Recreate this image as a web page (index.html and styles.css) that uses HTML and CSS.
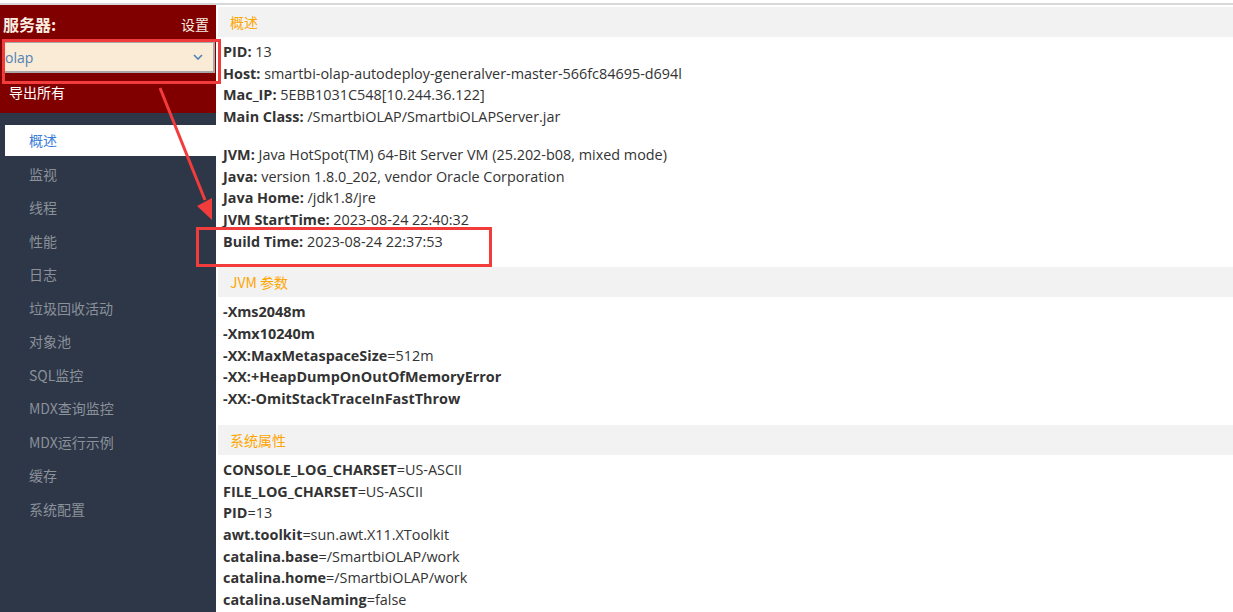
FILE: index.html
```html
<!DOCTYPE html>
<html lang="zh-CN">
<head>
  <meta charset="UTF-8" />
  <meta name="viewport" content="width=device-width, initial-scale=1.0" />
  <title>服务器监控</title>
  <link rel="stylesheet" href="styles.css">
</head>
<body>
  <div class="topline"></div>

  <div class="layout">
    <aside class="sidebar">
      <div class="server-box">
        <div class="server-head">
          <span class="server-title">服务器:</span>
          <a class="server-setting">设置</a>
        </div>
        <div class="select">
          <span>olap</span>
          <svg width="10" height="6" viewBox="0 0 10 6"><polyline points="1,1 5,5 9,1" fill="none" stroke="#4f82b4" stroke-width="1.6"/></svg>
        </div>
        <a class="export">导出所有</a>
      </div>

      <ul class="menu">
        <li class="active">概述</li>
        <li>监视</li>
        <li>线程</li>
        <li>性能</li>
        <li>日志</li>
        <li>垃圾回收活动</li>
        <li>对象池</li>
        <li>SQL监控</li>
        <li>MDX查询监控</li>
        <li>MDX运行示例</li>
        <li>缓存</li>
        <li>系统配置</li>
      </ul>
    </aside>

    <main class="content">
      <div class="panel-title">概述</div>
      <div class="panel-body">
        <p>
          <b>PID:</b> 13<br>
          <b>Host:</b> smartbi-olap-autodeploy-generalver-master-566fc84695-d694l<br>
          <b>Mac_IP:</b> 5EBB1031C548[10.244.36.122]<br>
          <b>Main Class:</b> /SmartbiOLAP/SmartbiOLAPServer.jar
        </p>
        <p>
          <b>JVM:</b> Java HotSpot(TM) 64-Bit Server VM (25.202-b08, mixed mode)<br>
          <b>Java:</b> version 1.8.0_202, vendor Oracle Corporation<br>
          <b>Java Home:</b> /jdk1.8/jre<br>
          <b>JVM StartTime:</b> 2023-08-24 22:40:32<br>
          <b>Build Time:</b> 2023-08-24 22:37:53
        </p>
      </div>

      <div class="panel-title">JVM 参数</div>
      <div class="panel-body">
        <p>
          <b>-Xms2048m</b><br>
          <b>-Xmx10240m</b><br>
          <b>-XX:MaxMetaspaceSize</b>=512m<br>
          <b>-XX:+HeapDumpOnOutOfMemoryError</b><br>
          <b>-XX:-OmitStackTraceInFastThrow</b>
        </p>
      </div>

      <div class="panel-title">系统属性</div>
      <div class="panel-body">
        <p>
          <b>CONSOLE_LOG_CHARSET</b>=US-ASCII<br>
          <b>FILE_LOG_CHARSET</b>=US-ASCII<br>
          <b>PID</b>=13<br>
          <b>awt.toolkit</b>=sun.awt.X11.XToolkit<br>
          <b>catalina.base</b>=/SmartbiOLAP/work<br>
          <b>catalina.home</b>=/SmartbiOLAP/work<br>
          <b>catalina.useNaming</b>=false
        </p>
      </div>
    </main>
  </div>

  <!-- red annotations drawn over the screenshot -->
  <div class="mark mark-select"></div>
  <div class="mark mark-build"></div>
  <svg class="arrow" width="1233" height="612" viewBox="0 0 1233 612">
    <line x1="160" y1="88" x2="205" y2="200" stroke="#f23b3b" stroke-width="3"/>
    <polygon points="212,220 197,206 212,198" fill="#f23b3b"/>
  </svg>
</body>
</html>
```

FILE: styles.css
```css
body {
  margin: 0;
  font-family: 'Open Sans', 'Noto Sans CJK SC', sans-serif;
  font-size: 14.4px;
  color: #333;
  background: #fff;
  overflow: hidden;
}
.topline {
  height: 3px;
  border-bottom: 2px solid #d8d8d8;
}
.layout {
  display: flex;
  height: 607px;
}
.sidebar {
  width: 216px;
  flex-shrink: 0;
  background: #2d3748;
  display: flex;
  flex-direction: column;
}
.server-box {
  background: #800000;
  height: 108px;
  padding: 0 7px 0 3px;
  box-sizing: border-box;
}
.server-head {
  display: flex;
  justify-content: space-between;
  align-items: center;
  height: 37px;
  color: #fbeee0;
  font-family: 'Noto Sans CJK SC', sans-serif;
}
.server-title {
  font-size: 16px;
  font-weight: bold;
}
.server-setting {
  font-size: 14px;
  cursor: pointer;
}
.select {
  display: flex;
  justify-content: space-between;
  align-items: center;
  margin-right: -6px;
  height: 31px;
  box-sizing: border-box;
  background: #faebd7;
  border: 1px solid #a8a8a8;
  border-right-width: 2px;
  border-bottom-width: 2px;
  padding: 0 10px 0 1px;
  color: #4f82b4;
  font-size: 14px;
}
.export {
  display: block;
  margin: 9px 0 0 6px;
  color: #fff;
  font-size: 14px;
  font-family: 'Noto Sans CJK SC', sans-serif;
}
.menu {
  list-style: none;
  margin: 12px 0 0 5px;
  padding: 0;
}
.menu li {
  height: 31px;
  line-height: 31px;
  margin-bottom: 2.55px;
  padding-left: 24px;
  color: #8b9099;
  font-size: 14px;
  font-family: 'Noto Sans CJK SC', sans-serif;
  cursor: pointer;
}
.menu li.active {
  background: #fff;
  color: #3b7dd8;
}
.content {
  flex: 1;
  margin: 2px 0 0 2px;
}
.panel-title {
  height: 30px;
  line-height: 30px;
  background: #f2f2f2;
  color: #ffa500;
  padding-left: 12px;
  font-size: 14px;
  font-family: 'Noto Sans CJK SC', sans-serif;
}
.panel-body {
  padding: 4px 5px 15px;
  line-height: 21.7px;
}
.panel-body p {
  margin: 0 0 16px;
}
.panel-body p:last-child {
  margin-bottom: 0;
}
.mark {
  position: absolute;
  border: 3px solid #f23b3b;
  box-sizing: border-box;
}
.mark-select {
  left: 2px;
  top: 39px;
  width: 219px;
  height: 45px;
}
.mark-build {
  left: 196px;
  top: 227px;
  width: 296px;
  height: 40px;
}
.arrow {
  position: absolute;
  left: 0;
  top: 0;
  pointer-events: none;
}
```
